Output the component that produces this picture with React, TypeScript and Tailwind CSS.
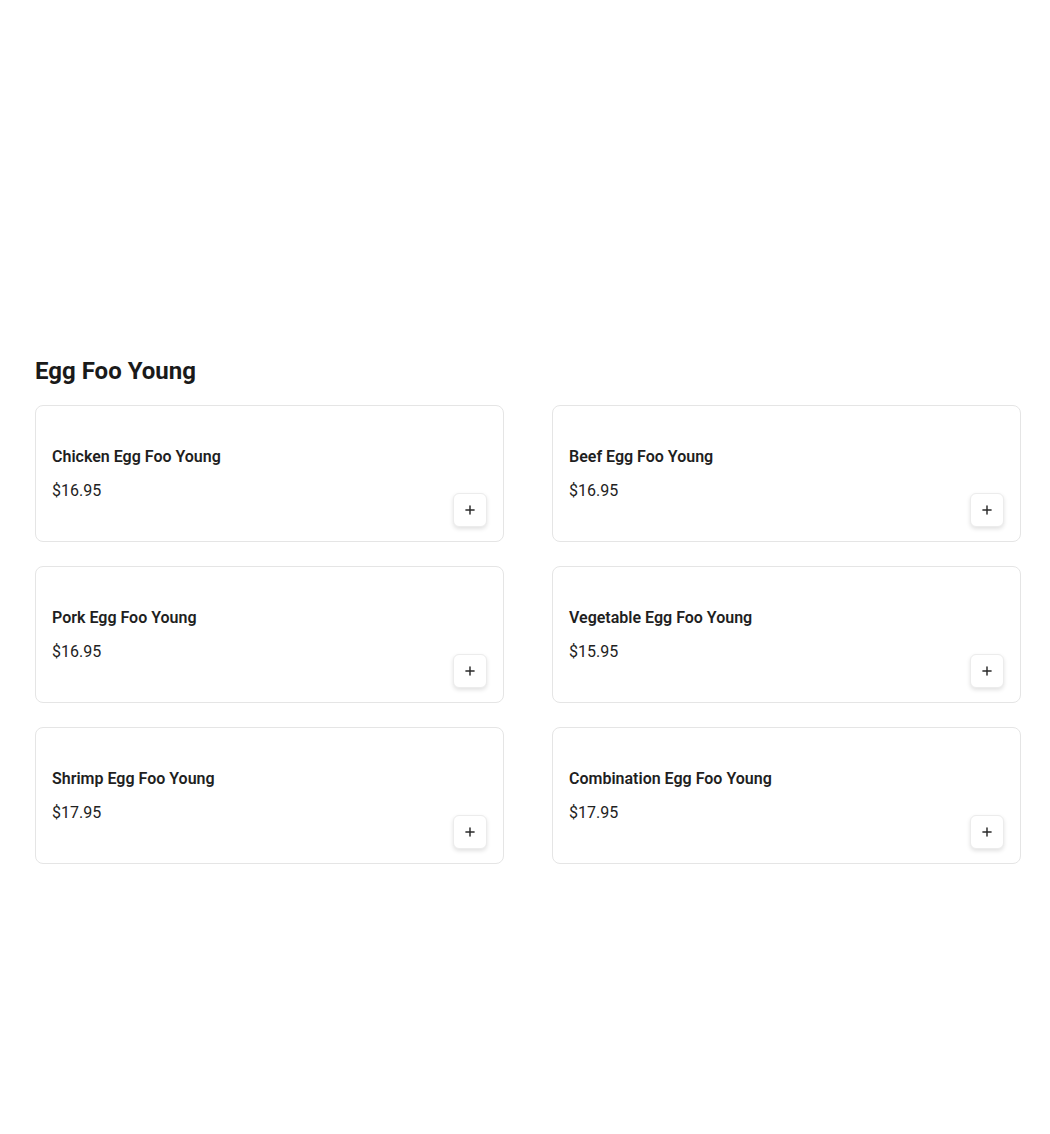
import React from 'react';
import { Plus } from 'lucide-react';

interface MenuItem {
  name: string;
  price: string;
}

const items: MenuItem[] = [
  { name: 'Chicken Egg Foo Young', price: '$16.95' },
  { name: 'Beef Egg Foo Young', price: '$16.95' },
  { name: 'Pork Egg Foo Young', price: '$16.95' },
  { name: 'Vegetable Egg Foo Young', price: '$15.95' },
  { name: 'Shrimp Egg Foo Young', price: '$17.95' },
  { name: 'Combination Egg Foo Young', price: '$17.95' },
];

function ItemCard({ item }: { item: MenuItem }) {
  return (
    <div className="h-[137px] rounded-lg border border-[#e5e5e5] bg-white pl-4 pr-4 pb-[14px] flex items-end justify-between">
      <div className="self-start pt-[39px] flex flex-col gap-[10px]">
        <div className="text-base leading-6 font-semibold text-[#1f1f1f]">{item.name}</div>
        <div className="text-base leading-6 text-[#222]">{item.price}</div>
      </div>
      <button
        type="button"
        className="w-[34px] h-[34px] rounded-md bg-white border border-[#ececec] shadow-[0_2px_4px_rgba(0,0,0,0.12)] flex items-center justify-center text-[#2a2a2a]"
      >
        <Plus size={14} strokeWidth={2.5} />
      </button>
    </div>
  );
}

export default function App() {
  return (
    <div className="min-h-[1134px] bg-white pt-[355px] pl-[35px] font-['Roboto',sans-serif]">
      <div className="w-[986px]">
        <h2 className="text-2xl leading-8 font-bold text-[#1a1a1a] mb-[18px]">Egg Foo Young</h2>
        <div className="grid grid-cols-2 gap-x-12 gap-y-6">
          {items.map((item) => (
            <ItemCard key={item.name} item={item} />
          ))}
        </div>
      </div>
    </div>
  );
}
